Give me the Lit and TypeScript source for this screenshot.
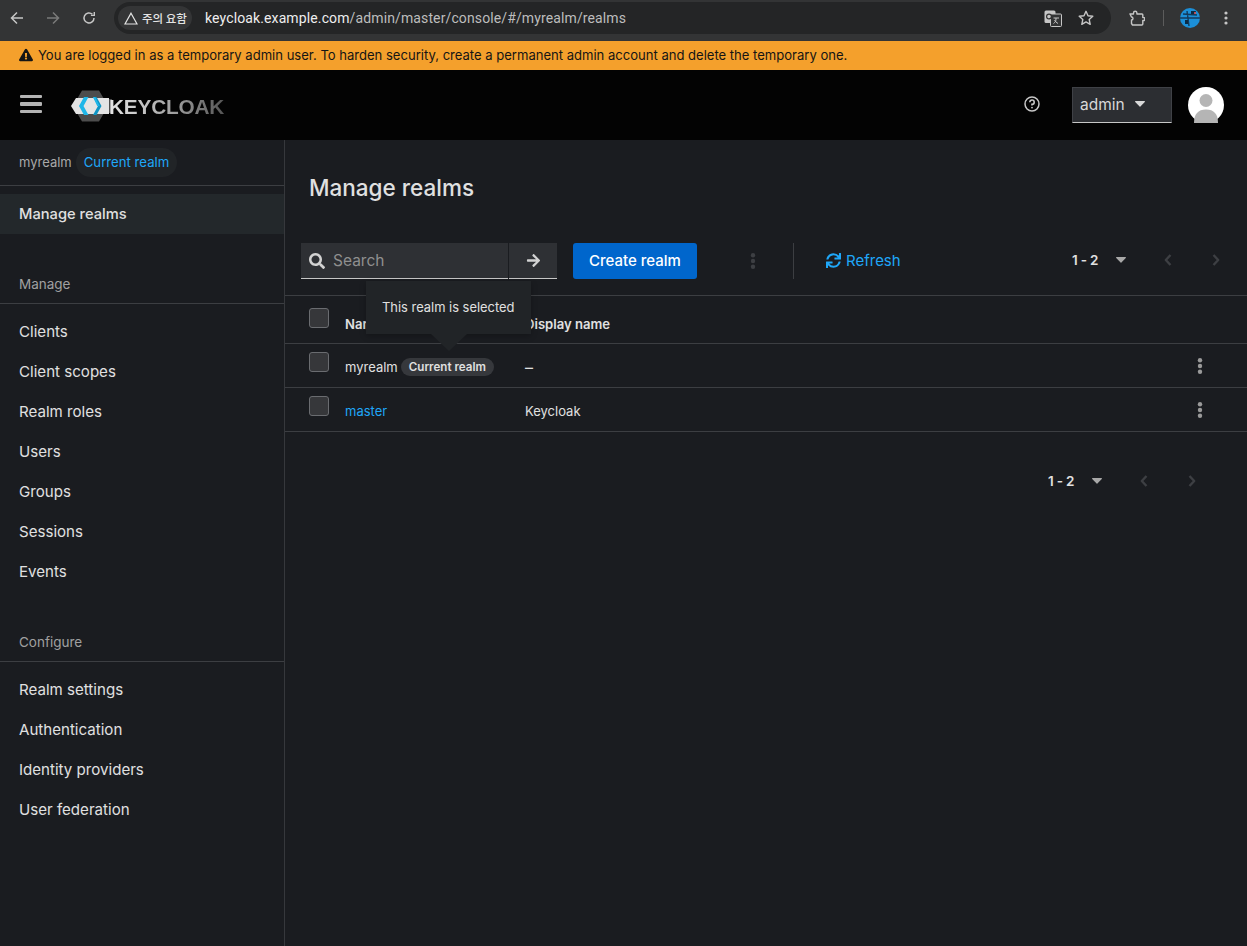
import { LitElement, html, css } from "lit";
import { customElement } from "lit/decorators.js";

const fa = (vb: string, d: string, size: number, color = "currentColor") => html`<svg width=${size} height=${size} viewBox=${vb} fill=${color}><path d=${d}></path></svg>`;
const SEARCH = "M505 442.7L405.3 343c-4.5-4.5-10.6-7-17-7H372c27.6-35.3 44-79.7 44-128C416 93.1 322.9 0 208 0S0 93.1 0 208s93.1 208 208 208c48.3 0 92.7-16.4 128-44v16.3c0 6.4 2.5 12.5 7 17l99.7 99.7c9.4 9.4 24.6 9.4 33.9 0l28.3-28.3c9.4-9.4 9.4-24.6.1-34zM208 336c-70.7 0-128-57.2-128-128 0-70.7 57.2-128 128-128 70.7 0 128 57.2 128 128 0 70.7-57.2 128-128 128z";
const SYNC = "M440.65 12.57l4 82.77A247.16 247.16 0 0 0 255.83 8C134.73 8 33.91 94.92 12.29 209.82A12 12 0 0 0 24.09 224h49.05a12 12 0 0 0 11.67-9.26 175.91 175.91 0 0 1 317-56.94l-101.46-4.86a12 12 0 0 0-12.57 12v47.41a12 12 0 0 0 12 12H500a12 12 0 0 0 12-12V12a12 12 0 0 0-12-12h-47.37a12 12 0 0 0-11.98 12.57zM255.83 432a175.61 175.61 0 0 1-146-77.8l101.8 4.87a12 12 0 0 0 12.57-12v-47.4a12 12 0 0 0-12-12H12a12 12 0 0 0-12 12V500a12 12 0 0 0 12 12h47.35a12 12 0 0 0 12-12.6l-4.15-82.57A247.17 247.17 0 0 0 255.83 504c121.11 0 221.93-86.92 243.55-201.82a12 12 0 0 0-11.8-14.18h-49.05a12 12 0 0 0-11.67 9.26A175.86 175.86 0 0 1 255.83 432z";
const ARROW = "M190.5 66.9l22.2-22.2c9.4-9.4 24.6-9.4 33.9 0L441 239c9.4 9.4 9.4 24.6 0 33.9L246.6 467.3c-9.4 9.4-24.6 9.4-33.9 0l-22.2-22.2c-9.5-9.5-9.3-25 .4-34.3L311.4 296H24c-13.3 0-24-10.7-24-24v-32c0-13.3 10.7-24 24-24h287.4L190.9 101.2c-9.8-9.3-10-24.8-.4-34.3z";
const WARN = "M569.517 440.013C587.975 472.007 564.806 512 527.94 512H48.054c-36.937 0-59.999-40.055-41.577-71.987L246.423 23.985c18.467-32.009 64.72-31.951 83.154 0l239.94 416.028zM288 354c-25.405 0-46 20.595-46 46s20.595 46 46 46 46-20.595 46-46-20.595-46-46-46zm-43.673-165.346l7.418 136c.347 6.364 5.609 11.346 11.982 11.346h48.546c6.373 0 11.635-4.982 11.982-11.346l7.418-136c.375-6.874-5.098-12.654-11.982-12.654h-63.383c-6.884 0-12.356 5.78-11.981 12.654z";

const kebab = (color: string) => html`<svg width="16" height="16" viewBox="0 0 16 16" fill=${color}><circle cx="8" cy="2.2" r="2.2"></circle><circle cx="8" cy="8" r="2.2"></circle><circle cx="8" cy="13.8" r="2.2"></circle></svg>`;
const caret = (color: string) => html`<svg width="10" height="6" viewBox="0 0 10 6" fill=${color}><path d="M0.6 0h8.8c.5 0 .8.6.4 1L5.4 5.5c-.2.3-.6.3-.8 0L.2 1C-.2.6.1 0 .6 0z"></path></svg>`;
const chev = (dir: "l" | "r") => html`<svg width="8" height="12" viewBox="0 0 8 12" fill="none" stroke="#3d3f43" stroke-width="2.4" stroke-linejoin="round"><path d=${dir === "l" ? "M6.5 1L1.8 6l4.700 5" : "M1.5 1l4.700 5-4.700 5"}></path></svg>`;

const logo = html`<svg width="44" height="32" viewBox="0 0 44 32">
  <path d="M11 0.5h17l5 8.500H41v14H33l-5 8.500H11L2 16z" fill="#4d4d4d"></path>
  <path d="M7 8h31v16H7z" fill="#e4e4e4"></path>
  <path d="M0 16l5-8h9l-5 8 5 8H5z" fill="#e4e4e4"></path>
  <path d="M13 7h4.500l-5 9 5 9H13l-5-9z" fill="#1fb6e8"></path>
  <path d="M22 7h3.500l5 9-5 9H22l5-9z" fill="#0e94c4"></path>
  <path d="M22 7h2.200l4.600 9h-2.600z" fill="#1fb6e8"></path>
</svg>`;

@customElement("app-root")
export class AppRoot extends LitElement {
  static styles = css`
    :host { display: block; width: 1247px; height: 946px; overflow: hidden; background: #1a1c20; color: #e0e0e0; font-family: "Inter", "Noto Sans", sans-serif; font-size: 14px; }
    * { box-sizing: border-box; }
    .chrome { height: 41px; background: #333435; display: flex; align-items: flex-start; padding: 2px 0 0 9px; }
    .nav-btn { width: 16px; height: 32px; display: flex; align-items: center; justify-content: center; color: #c6c6c6; margin-right: 20px; }
    .nav-btn.dim { color: #7a7a7a; }
    .nav-btn.last { margin-right: 18px; }
    .omni { margin-left: -1px; width: 997px; height: 32px; border-radius: 16px; background: #242526; display: flex; align-items: center; padding: 0 4px; }
    .chip { height: 24px; width: 74px; border-radius: 12px; background: #343536; display: flex; align-items: center; padding-left: 6px; gap: 4px; font: 500 11.5px "Noto Sans CJK KR", sans-serif; color: #e4e4e4; }
    .url { margin-left: 13px; font: 14px "Roboto", sans-serif; color: #bdbdbd; letter-spacing: .12px; white-space: nowrap; }
    .url b { font-weight: 400; color: #eee; }
    .omni-right { margin-left: auto; display: flex; align-items: center; gap: 16px; padding-right: 13px; }
    .chrome-right { display: flex; align-items: center; height: 32px; padding-left: 18px; }
    .sep { width: 1px; height: 16px; background: #5c5c5c; margin: 0 16px 0 18px; }
    .dots { margin-left: 24px; display: flex; }
    .banner { height: 29px; background: #f4a02c; color: #151515; display: flex; align-items: center; padding: 0 0 1px 19px; gap: 5px; font-size: 13.05px; white-space: nowrap; }
    .header { height: 70px; background: #030303; display: flex; align-items: center; padding: 0 23px 0 20px; }
    .burger { width: 22px; height: 18px; display: flex; flex-direction: column; justify-content: space-between; margin: -2px 29px 0 0; }
    .burger span { height: 3.4px; border-radius: 1px; background: #b4b4b4; }
    .brand { display: flex; align-items: center; margin-top: 2px; }
    .brand-text { font: 700 20.8px "Liberation Sans", sans-serif; letter-spacing: -.2px; margin: 1px 0 0 -6px; background: linear-gradient(90deg, #e6e6e6 0%, #c4c4c4 30%, #9a9a9a 60%, #555 100%); -webkit-background-clip: text; background-clip: text; color: transparent; }
    .head-right { margin-left: auto; display: flex; align-items: center; }
    .help { color: #c7c7c7; display: flex; margin: -2px 32px 0 0; }
    .user { width: 100px; height: 36px; background: #2c2e32; border-bottom: 1px solid #c7c7c7; border-top: 1px solid #3f4146; border-left: 1px solid #3f4146; border-right: 1px solid #3f4146; display: flex; align-items: center; padding: 0 0 2px 7px; font-size: 15.5px; color: #d8d8d8; }
    .user .c { margin-left: 10px; display: flex; }
    .avatar { margin-left: 16px; display: flex; }
    .body { display: flex; height: 806px; }
    .side { width: 285px; border-right: 1px solid #36383c; flex: none; }
    .realm { height: 46px; border-bottom: 1px solid #3c3e42; display: flex; align-items: center; padding: 0 0 1px 19px; color: #a9a9a9; font-size: 13px; }
    .pill { margin-left: 4px; height: 29px; border-radius: 15px; background: #212427; color: #1fa7f8; padding: 0 8px; display: flex; align-items: center; font-size: 13.2px; }
    .current { margin-top: 8px; height: 40px; background: #23282b; display: flex; align-items: center; padding: 0 0 1px 19px; font-weight: 500; color: #e0e0e0; font-size: 14.7px; }
    .group { margin-top: 30px; height: 40px; border-bottom: 1px solid #3c3e42; display: flex; align-items: center; padding: 0 0 0 19px; color: #a0a0a0; font-size: 13.5px; }
    .group.second { margin-top: 31px; }
    .nav { padding-top: 7px; }
    .nav div { height: 40px; display: flex; align-items: center; padding-left: 19px; color: #e0e0e0; font-size: 15.1px; }
    .main { flex: 1; position: relative; }
    h1 { margin: 0; padding: 34px 0 0 24px; height: 103px; font-size: 22.5px; font-weight: 500; line-height: 28px; color: #e0e0e0; }
    .toolbar { height: 53px; display: flex; align-items: flex-start; padding-left: 16px; border-bottom: 1px solid #3c3e42; }
    .search { width: 207px; height: 36px; background: #2e3034; border-bottom: 1px solid #c7c7c7; display: flex; align-items: center; padding-left: 8px; gap: 8px; color: #8f8f8f; font-size: 15.5px; }
    .search svg { color: #d2d2d2; }
    .go { margin-left: 1px; width: 48px; height: 36px; background: #2e3034; border-bottom: 1px solid #c7c7c7; color: #d2d2d2; display: flex; align-items: center; justify-content: center; }
    .create { margin-left: 16px; width: 124px; height: 36px; border-radius: 3px; background: #0066cc; color: #fff; display: flex; align-items: center; justify-content: center; padding-bottom: 2px; font-size: 15px; font-weight: 500; }
    .tkebab { margin-left: 48px; height: 36px; display: flex; align-items: center; }
    .vsep { margin-left: 32px; width: 1px; height: 36px; background: #3c3e42; }
    .refresh { margin-left: 32px; height: 36px; display: flex; align-items: center; gap: 5px; padding-bottom: 1px; color: #1fa7f8; font-size: 15px; }
    .refresh span { margin-top: -1px; }
    .pager { display: flex; align-items: center; height: 36px; color: #e0e0e0; font-weight: 600; font-size: 13.5px; }
    .pager .num { word-spacing: -1px; letter-spacing: .3px; width: 44px; }
    .pager .ch { margin-left: 40px; display: flex; }
    .pager .ch.first { margin-left: 38px; }
    .pager .cr { display: flex; }
    .pager.top { margin: 0 27px 0 auto; padding-bottom: 2px; }
    .pager.bot { justify-content: flex-end; margin: 23px 51px 0 0; height: 52px; }
    .row { display: grid; grid-template-columns: 36px 180px 1fr 55px; padding: 2px 0 0 24px; border-bottom: 1px solid #3c3e42; height: 44px; align-items: center; font-size: 13px; }
    .row.head { height: 48px; font-weight: 600; padding-top: 8px; font-size: 13.1px; }
    .check { width: 20px; height: 20px; background: #36373a; border: 1px solid #6a6c70; border-radius: 3px; margin-top: -10px; }
    .row.head .check { margin-top: -12px; }
    .namecell { display: flex; align-items: center; }
    .label { margin: 1px 0 0 3px; height: 18px; border-radius: 9px; background: #36383c; color: #e0e0e0; font-size: 11.6px; font-weight: 600; padding: 0 8px; display: flex; align-items: center; }
    .dash { font-size: 16px; }
    a { color: #1fa7f8; text-decoration: none; }
    .rk { display: flex; margin-top: -2px; }
    .tip { position: absolute; left: 81px; top: 141px; width: 165px; height: 53px; background: #212427; color: #e0e0e0; padding: 0 0 1px 16px; display: flex; align-items: center; font-size: 12.9px; white-space: nowrap; box-shadow: 0 2px 6px rgba(0,0,0,.25); }
    .tip::after { content: ""; position: absolute; left: 65px; bottom: -17px; border-left: 18px solid transparent; border-right: 18px solid transparent; border-top: 17px solid #212427; }
  `;

  private pager(cls: string) {
    return html`<div class="pager ${cls}"><span class="num">1 - 2</span><span class="cr">${caret("#a8a8a8")}</span><span class="ch first">${chev("l")}</span><span class="ch">${chev("r")}</span></div>`;
  }

  render() {
    const manage = ["Clients", "Client scopes", "Realm roles", "Users", "Groups", "Sessions", "Events"];
    const configure = ["Realm settings", "Authentication", "Identity providers", "User federation"];
    return html`
      <div class="chrome">
        <div class="nav-btn"><svg width="14" height="14" viewBox="0 0 14 14" fill="none" stroke="currentColor" stroke-width="1.5"><path d="M13 7H2M7 1.5L1.5 7 7 12.5"></path></svg></div>
        <div class="nav-btn dim"><svg width="14" height="14" viewBox="0 0 14 14" fill="none" stroke="currentColor" stroke-width="1.5"><path d="M1 7h11M7 1.5L12.5 7 7 12.5"></path></svg></div>
        <div class="nav-btn last"><svg width="14" height="14" viewBox="0 0 14 14" fill="none" stroke="currentColor" stroke-width="1.5"><path d="M12 7a5 5 0 1 1-1.6-3.7"></path><path d="M12.3 1v3.4H8.9" stroke-width="1.4"></path></svg></div>
        <div class="omni">
          <div class="chip"><svg width="14" height="13" viewBox="0 0 14 13" fill="none" stroke="#e4e4e4" stroke-width="1.2"><path d="M7 1.2L13 12H1z"></path></svg>주의 요함</div>
          <div class="url"><b>keycloak.example.com</b>/admin/master/console/#/myrealm/realms</div>
          <div class="omni-right">
            <svg width="18" height="17" viewBox="0 0 18 17"><rect x="0.5" y="0.5" width="11" height="12.5" rx="1.5" fill="#c6c6c6"></rect><rect x="6.5" y="4" width="11" height="12.5" rx="1" fill="#333435" stroke="#c6c6c6"></rect><circle cx="5" cy="6.5" r="2.4" fill="none" stroke="#333" stroke-width="1.2"></circle><path d="M9.5 8h5.5M12 8v1c0 2-1 3.500-2.500 4.500M10.500 10c.8 1.500 2 2.700 3.500 3.500" stroke="#c6c6c6" stroke-width="1" fill="none"></path></svg>
            <svg width="16" height="16" viewBox="0 0 16 16" fill="none" stroke="#c6c6c6" stroke-width="1.4" stroke-linejoin="round"><path d="M8 1.3l2 4.500 4.800.5-3.600 3.200 1 4.800L8 11.900l-4.200 2.400 1-4.800L1.200 6.300 6 5.800z"></path></svg>
          </div>
        </div>
        <div class="chrome-right">
          <svg width="16" height="16" viewBox="0 0 16 16" fill="none" stroke="#c6c6c6" stroke-width="1.4" stroke-linejoin="round"><path d="M1 4h3.500V3a1.700 1.700 0 0 1 3.400 0v1h5.100a.8.8 0 0 1 .8.800v2.700h.6a1.500 1.500 0 0 1 0 3h-.6V14a1 1 0 0 1-1 1H3.500l-1-1.500V10a1.500 1.500 0 0 0 0-3z"></path></svg>
          <div class="sep"></div>
          <svg width="20" height="20" viewBox="0 0 20 20"><circle cx="10" cy="10" r="10" fill="#1c8fd8"></circle><path d="M0 10h20M7 3l2 15M3 6l14 1" stroke="#123a5c" stroke-width="1.4"></path><path d="M11 3h5l-1 3h-4zM5 12h3v4H5z" fill="#0c2a44"></path><circle cx="15" cy="5" r="1" fill="#e55"></circle></svg>
          <div class="dots"><svg width="4" height="14" viewBox="0 0 4 14" fill="#c6c6c6"><circle cx="2" cy="2" r="1.600"></circle><circle cx="2" cy="7" r="1.600"></circle><circle cx="2" cy="12" r="1.600"></circle></svg></div>
        </div>
      </div>
      <div class="banner">${fa("0 0 576 512", WARN, 14, "#151515")}<span>You are logged in as a temporary admin user. To harden security, create a permanent admin account and delete the temporary one.</span></div>
      <div class="header">
        <div class="burger"><span></span><span></span><span></span></div>
        <div class="brand">${logo}<span class="brand-text">KEYCLOAK</span></div>
        <div class="head-right">
          <span class="help"><svg width="16" height="16" viewBox="0 0 16 16" fill="none" stroke="currentColor" stroke-width="1.500"><circle cx="8" cy="8" r="7"></circle><path d="M5.800 6.200A2.200 2.200 0 1 1 8 8.400v1" stroke-width="1.600"></path><circle cx="8" cy="11.600" r=".9" fill="currentColor" stroke="none"></circle></svg></span>
          <div class="user">admin<span class="c">${caret("#d8d8d8")}</span></div>
          <span class="avatar"><svg width="36" height="36" viewBox="0 0 36 36"><circle cx="18" cy="18" r="18" fill="#fff"></circle><circle cx="18" cy="13.500" r="6.500" fill="#b5b5b5"></circle><path d="M6 36c0-9 4-13.500 12-13.500S30 27 30 36z" fill="#b5b5b5"></path></svg></span>
        </div>
      </div>
      <div class="body">
        <aside class="side">
          <div class="realm">myrealm<span class="pill">Current realm</span></div>
          <div class="current">Manage realms</div>
          <div class="group">Manage</div>
          <div class="nav">${manage.map((m) => html`<div>${m}</div>`)}</div>
          <div class="group second">Configure</div>
          <div class="nav">${configure.map((m) => html`<div>${m}</div>`)}</div>
        </aside>
        <main class="main">
          <h1>Manage realms</h1>
          <div class="toolbar">
            <div class="search">${fa("0 0 512 512", SEARCH, 16)}<span>Search</span></div>
            <div class="go">${fa("0 0 448 512", ARROW, 15)}</div>
            <div class="create">Create realm</div>
            <div class="tkebab">${kebab("#3d3f43")}</div>
            <div class="vsep"></div>
            <div class="refresh">${fa("0 0 512 512", SYNC, 15)}<span>Refresh</span></div>
            ${this.pager("top")}
          </div>
          <div class="row head"><span class="check"></span><span>Name</span><span>Display name</span><span></span></div>
          <div class="row"><span class="check"></span><span class="namecell">myrealm<span class="label">Current realm</span></span><span class="dash">–</span><span class="rk">${kebab("#9a9a9a")}</span></div>
          <div class="row"><span class="check"></span><span><a>master</a></span><span>Keycloak</span><span class="rk">${kebab("#9a9a9a")}</span></div>
          ${this.pager("bot")}
          <div class="tip">This realm is selected</div>
        </main>
      </div>
    `;
  }
}
